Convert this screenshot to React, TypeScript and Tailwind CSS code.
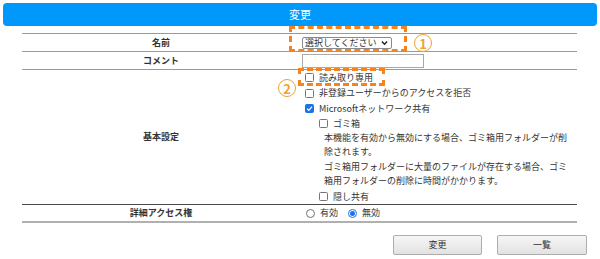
import React from "react";

const font = { fontFamily: '"Noto Sans CJK JP", "Noto Sans", sans-serif' };

const Box = ({ checked = false }: { checked?: boolean }) => (
  <span
    className={
      "inline-flex w-[9px] h-[9px] shrink-0 items-center justify-center rounded-[1.5px] border " +
      (checked ? "bg-[#1a73e8] border-[#1a73e8]" : "bg-white border-[#767676]")
    }
  >
    {checked && (
      <svg width="7" height="7" viewBox="0 0 10 10">
        <path d="M1.5 5.2 L4 7.6 L8.6 2.4" fill="none" stroke="white" strokeWidth="1.8" />
      </svg>
    )}
  </span>
);

const Radio = ({ on = false }: { on?: boolean }) => (
  <span
    className={
      "inline-flex w-[9px] h-[9px] shrink-0 items-center justify-center rounded-full border " +
      (on ? "border-[#1a73e8] bg-white" : "border-[#767676] bg-white")
    }
  >
    {on && <span className="w-[5px] h-[5px] rounded-full bg-[#1a73e8]" />}
  </span>
);

const Check = ({ label, checked, indent, h }: { label: string; checked?: boolean; indent?: boolean; h: string }) => (
  <div className={"flex items-center gap-[5px] " + h + (indent ? " pl-[17px]" : " pl-[3px]")}>
    <Box checked={checked} />
    <span>{label}</span>
  </div>
);

export default function App() {
  return (
    <div className="relative w-[600px] h-[259px] bg-white text-[9px] text-[#333]" style={font}>
      <div className="mx-[3px] pt-[3px]">
        <div className="h-[23px] rounded-[4px] bg-[#0099fb] flex items-center justify-center text-white text-[11px]">
          変更
        </div>
      </div>

      <div className="ml-[22px] mt-[7px] w-[555px]">
        <div className="flex h-[18px] border-t border-[#9a9a9a]">
          <div className="w-[278px] flex items-center justify-center font-bold">名前</div>
          <div className="flex items-center pl-[2px]">
            <div className="flex items-center h-[12px] w-[90px] border border-[#8a8a8a] rounded-[2px] pl-[2px] pr-[3px] justify-between">
              <span className="leading-none">選択してください</span>
              <svg width="7" height="6" viewBox="0 0 8 6">
                <path d="M1 1.2 L4 4.4 L7 1.2" fill="none" stroke="#222" strokeWidth="1.6" />
              </svg>
            </div>
          </div>
        </div>

        <div className="flex h-[18px] border-t border-[#9a9a9a]">
          <div className="w-[278px] flex items-center justify-center font-bold">コメント</div>
          <div className="flex items-center pl-[2px]">
            <div className="h-[14px] w-[122px] border border-[#a8a8a8] bg-white" />
          </div>
        </div>

        <div className="flex h-[135px] border-t border-[#9a9a9a]">
          <div className="w-[278px] flex items-center justify-center font-bold">基本設定</div>
          <div className="flex flex-col pl-[2px] w-[277px]">
            <Check label="読み取り専用" h="h-[15px]" />
            <Check label="非登録ユーザーからのアクセスを拒否" h="h-[16px]" />
            <Check label="Microsoftネットワーク共有" checked h="h-[15.5px]" />
            <Check label="ゴミ箱" indent h="h-[14px]" />
            <div className="pl-[22px] pr-[6px] leading-[14.6px]">
              <p>本機能を有効から無効にする場合、ゴミ箱用フォルダーが削除されます。</p>
              <p>ゴミ箱用フォルダーに大量のファイルが存在する場合、ゴミ箱用フォルダーの削除に時間がかかります。</p>
            </div>
            <Check label="隠し共有" indent h="h-[15px]" />
          </div>
        </div>

        <div className="flex h-[19px] border-t border-[#4a4a4a] border-b-2 border-b-[#b0b0b0]">
          <div className="w-[278px] flex items-center justify-center font-bold">詳細アクセス権</div>
          <div className="flex items-center pl-[6px] gap-[5px]">
            <Radio />
            <span className="mr-[5px]">有効</span>
            <Radio on />
            <span>無効</span>
          </div>
        </div>
      </div>

      <div className="flex justify-end gap-[15px] pr-[13px] mt-[12px]">
        <button className="w-[89px] h-[20px] rounded-[2px] border border-[#adadad] bg-gradient-to-b from-[#f6f6f6] to-[#e2e2e2] text-[9px] text-[#333]">
          変更
        </button>
        <button className="w-[90px] h-[20px] rounded-[2px] border border-[#adadad] bg-gradient-to-b from-[#f6f6f6] to-[#e2e2e2] text-[9px] text-[#333]">
          一覧
        </button>
      </div>

      {/* annotations */}
      <div className="absolute left-[289px] top-[26px] w-[118px] h-[26px] border-[3px] border-dashed border-[#f5841f]" />
      <div className="absolute left-[298px] top-[68px] w-[87px] h-[18px] border-[3px] border-dashed border-[#f5841f]" />
      <div className="absolute left-[414px] top-[34px] w-[18px] h-[18px] rounded-full border-[1.5px] border-[#eda232] flex items-center justify-center text-[#eda232] text-[13px] font-bold leading-none">
        1
      </div>
      <div className="absolute left-[278px] top-[79px] w-[18px] h-[18px] rounded-full border-[1.5px] border-[#eda232] flex items-center justify-center text-[#eda232] text-[13px] font-bold leading-none">
        2
      </div>
    </div>
  );
}
